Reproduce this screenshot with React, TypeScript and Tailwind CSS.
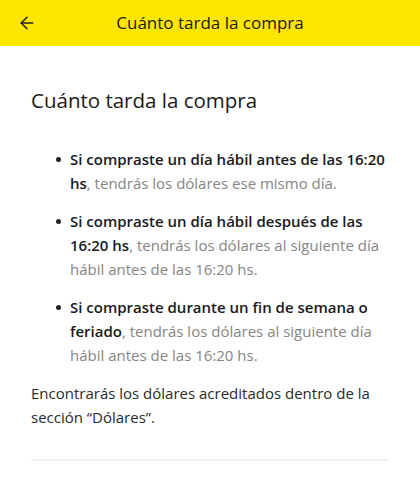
import React from "react";
import { ArrowLeft } from "lucide-react";

const items = [
  { strong: "Si compraste un día hábil antes de las 16:20 hs", rest: ", tendrás los dólares ese mismo día." },
  { strong: "Si compraste un día hábil después de las 16:20 hs", rest: ", tendrás los dólares al siguiente día hábil antes de las 16:20 hs." },
  { strong: "Si compraste durante un fin de semana o feriado", rest: ", tendrás los dólares al siguiente día hábil antes de las 16:20 hs." },
];

const App: React.FC = () => {
  return (
    <div className="min-h-screen w-full bg-white font-['Open_Sans','Noto_Sans',sans-serif]">
      {/* Top bar */}
      <div className="h-[46px] bg-[#ffe600] flex items-center relative">
        <button className="absolute left-[17px] top-[13px] text-[#222]">
          <ArrowLeft size={20} strokeWidth={1.8} />
        </button>
        <h1 className="w-full text-center text-[17px] text-[#1a1a1a]">Cuánto tarda la compra</h1>
      </div>

      <div className="px-[31px] pt-[40px]">
        <h2 className="text-[20.5px] leading-[28px] text-[#1a1a1a]">Cuánto tarda la compra</h2>

        <ul className="mt-[33px] pl-[39px] flex flex-col gap-[14px]">
          {items.map((item, i) => (
            <li key={i} className="relative text-[15px] leading-[24px] text-[#858585]">
              <span className="absolute -left-[14px] top-[10px] w-[5px] h-[5px] rounded-full bg-[#222]" />
              <span className="font-semibold text-[#1a1a1a]">{item.strong}</span>
              {item.rest}
            </li>
          ))}
        </ul>

        <p className="mt-[14px] text-[15px] leading-[24px] text-[#2a2a2a]">
          Encontrarás los dólares acreditados dentro de la sección “Dólares”.
        </p>

        <div className="mt-[30px] h-[2px] bg-[#efefef]" />
      </div>
    </div>
  );
};

export default App;
